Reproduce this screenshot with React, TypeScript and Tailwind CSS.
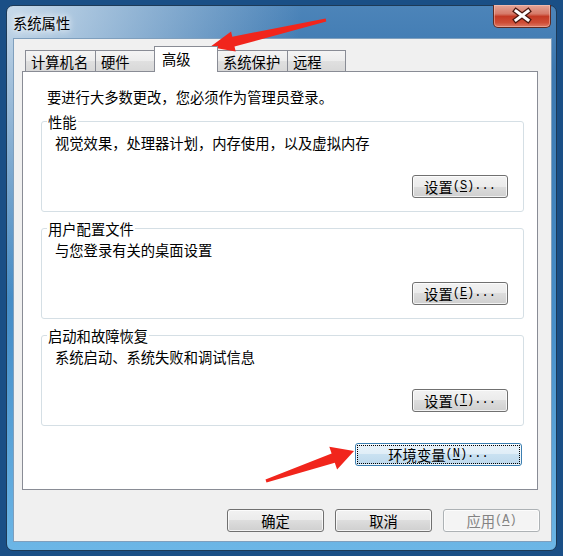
import React from 'react'

type BtnKind = 'normal' | 'focus' | 'disabled'

function WinButton({
    kind = 'normal',
    className = '',
    children
}: {
    kind?: BtnKind
    className?: string
    children: React.ReactNode
}) {
    const skin =
        kind === 'focus'
            ? 'border-[#3c7fb1] bg-[linear-gradient(to_bottom,#e9f3fa_0%,#dfedf7_50%,#c9e1f1_50%,#bdd8ec_100%)] text-black'
            : kind === 'disabled'
              ? 'border-[#adb2b5] bg-[#f4f4f4] text-[#838383]'
              : 'border-[#707070] bg-[linear-gradient(to_bottom,#f2f2f2_0%,#ebebeb_50%,#dddddd_50%,#cfcfcf_100%)] text-black'
    return (
        <button
            type="button"
            className={`flex h-[23px] shrink-0 items-stretch rounded-[3px] border p-[1px] shadow-[inset_0_0_0_1px_rgba(255,255,255,0.75)] ${skin} ${className}`}
        >
            <span
                className={`flex flex-1 items-center justify-center leading-[17px] ${
                    kind === 'focus' ? 'border border-dotted border-black' : 'border border-transparent'
                }`}
            >
                {children}
            </span>
        </button>
    )
}

// half-width ASCII, like SimSun's fixed-width latin
function Ascii({ children }: { children: React.ReactNode }) {
    return <span className="font-['Liberation_Mono',monospace] text-[12px]">{children}</span>
}

function Key({ k }: { k: string }) {
    return <span className="underline underline-offset-[2px]">{k}</span>
}

function Hot({ label, k, dots = true }: { label: string; k: string; dots?: boolean }) {
    return (
        <>
            {label}
            <Ascii>
                (<Key k={k} />){dots ? '...' : ''}
            </Ascii>
        </>
    )
}

function Group({ title, desc, hotkey }: { title: string; desc: string; hotkey: string }) {
    return (
        <fieldset className="mt-[8px] h-[99px] w-[483px] rounded-[3px] border border-[#d5dfe5] px-[5px]">
            <legend className="px-[1px] leading-[17px]">{title}</legend>
            <div className="mt-[4px] pl-[8px] leading-[17px]">{desc}</div>
            <div className="mt-[24px] flex justify-end pr-[10px]">
                <WinButton className="w-[96px]">
                    <Hot label="设置" k={hotkey} />
                </WinButton>
            </div>
        </fieldset>
    )
}

const tabs = [
    { label: '计算机名', w: 'w-[71px]' },
    { label: '硬件', w: 'w-[60px]' },
    { label: '高级', w: 'w-[64px]', active: true },
    { label: '系统保护', w: 'w-[71px]' },
    { label: '远程', w: 'w-[59px]' }
]

function CloseButton() {
    return (
        <div className="-mt-px h-[23px] w-[58px] rounded-b-[5px] border border-t-0 border-[#5e2a22] bg-[linear-gradient(to_bottom,#e4a597_0%,#d67a69_40%,#c43a25_52%,#cf4d36_80%,#dc7a66_100%)] shadow-[inset_0_0_0_1px_rgba(255,210,200,0.45)]">
            <svg width="56" height="22" viewBox="0 0 56 22">
                <path d="M22 6 L34 15 M34 6 L22 15" stroke="#4a1810" strokeWidth="5.5" strokeLinecap="square" />
                <path d="M22 6 L34 15 M34 6 L22 15" stroke="#ffffff" strokeWidth="3" strokeLinecap="square" />
            </svg>
        </div>
    )
}

function Arrows() {
    return (
        <svg className="pointer-events-none absolute left-0 top-0" width="563" height="556" viewBox="0 0 563 556">
            <polygon
                fill="#f1251c"
                points="325.7,18.5 232.3,36.7 231.1,31.6 210,47 235.7,51.4 234.5,46.5 326.3,21.5"
            />
            <polygon
                fill="#f1251c"
                points="265.5,479.6 331.6,453.4 329.3,446.7 354,451 337.1,469.5 334.8,462.8 266.5,482.4"
            />
        </svg>
    )
}

export default function App() {
    return (
        <div className="relative h-[556px] w-[563px] overflow-hidden bg-[#1a4f86] pl-[6px] pt-[5px] font-['Noto_Sans_CJK_SC','Noto_Sans',sans-serif] text-[14.3px] text-black">
            <div className="flex h-[546px] w-[551px] flex-col rounded-[7px] border border-[#1d3a57] bg-[radial-gradient(ellipse_at_0%_0%,rgba(214,228,240,0.9)_0%,rgba(214,228,240,0)_38%),linear-gradient(to_bottom,#4c84b9_0%,#3c78b0_12%,#4890ca_60%,#6cb6e6_100%)] pb-[8px] pl-[6px] pr-[4px]">
                <div className="flex h-[32px] shrink-0 items-start justify-between">
                    <span className="pt-[8px] leading-[17px] [text-shadow:0_0_6px_#fff,0_0_10px_#fff]">系统属性</span>
                    <div className="mr-px">
                        <CloseButton />
                    </div>
                </div>

                <div className="flex flex-1 flex-col border border-[#7f9fbd] bg-[#f0f0f0] pl-[8px] pr-[11px] pt-[8px]">
                    <div className="ml-[3px] flex h-[24px] items-end">
                        {tabs.map((t, i) =>
                            t.active ? (
                                <div
                                    key={t.label}
                                    className={`relative z-10 -mb-px -ml-px flex h-[26px] items-start border border-b-0 border-[#898c95] bg-white pl-[7px] pt-[3px] leading-[17px] ${t.w}`}
                                >
                                    {t.label}
                                </div>
                            ) : (
                                <div
                                    key={t.label}
                                    className={`flex h-[21px] items-center border border-b-0 border-[#898c95] bg-[linear-gradient(to_bottom,#f4f4f4_0%,#ececec_50%,#e0e0e0_50%,#d8d8d8_100%)] pl-[5px] pt-[1px] leading-[17px] ${
                                        i === 0 ? '' : '-ml-px'
                                    } ${t.w}`}
                                >
                                    {t.label}
                                </div>
                            )
                        )}
                    </div>

                    <div className="flex h-[419px] w-[516px] flex-col border border-[#898c95] bg-white pl-[18px] pr-[13px] pt-[16px]">
                        <div className="ml-[6px] leading-[17px]">要进行大多数更改，您必须作为管理员登录。</div>
                        <Group title="性能" desc="视觉效果，处理器计划，内存使用，以及虚拟内存" hotkey="S" />
                        <Group title="用户配置文件" desc="与您登录有关的桌面设置" hotkey="E" />
                        <Group title="启动和故障恢复" desc="系统启动、系统失败和调试信息" hotkey="T" />
                        <div className="mr-[2px] mt-[17px] flex justify-end">
                            <WinButton kind="focus" className="w-[167px]">
                                <Hot label="环境变量" k="N" />
                            </WinButton>
                        </div>
                    </div>

                    <div className="mt-[19px] flex justify-end gap-[11px]">
                        <WinButton className="w-[97px]">确定</WinButton>
                        <WinButton className="w-[97px]">取消</WinButton>
                        <WinButton kind="disabled" className="w-[97px]">
                            <Hot label="应用" k="A" dots={false} />
                        </WinButton>
                    </div>
                </div>
            </div>
            <Arrows />
        </div>
    )
}
